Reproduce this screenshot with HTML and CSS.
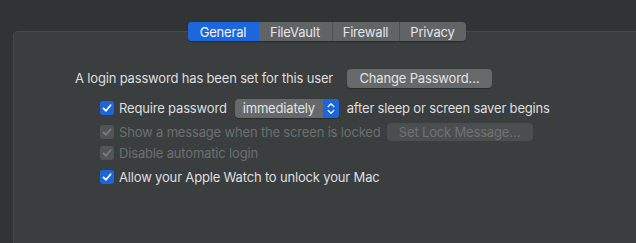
FILE: index.html
```html
<!DOCTYPE html>
<html>
<head>
<meta charset="utf-8">
<link rel="stylesheet" href="styles.css">
</head>
<body>
<div class="window">
  <div class="tabs-row">
    <div class="tabs">
      <div class="tab active">General</div>
      <div class="tab">FileVault</div>
      <div class="tab">Firewall</div>
      <div class="tab">Privacy</div>
    </div>
  </div>
  <div class="panel">
    <div class="row row-first">
      <span class="label">A login password has been set for this user</span>
      <span class="btn btn-change">Change Password…</span>
    </div>
    <div class="row row-check row-req">
      <span class="cb on"><svg viewBox="0 0 14 14"><path d="M3.5 7.3 L6 9.8 L10.6 4.2" /></svg></span>
      <span class="label">Require password</span>
      <span class="popup"><span class="popup-text">immediately</span><span class="popup-arrows"><svg viewBox="0 0 16 20"><path d="M5 8 L8 5 L11 8 M5 12 L8 15 L11 12"/></svg></span></span>
      <span class="label">after sleep or screen saver begins</span>
    </div>
    <div class="row row-check row-msg disabled">
      <span class="cb dis"><svg viewBox="0 0 14 14"><path d="M3.5 7.3 L6 9.8 L10.6 4.2" /></svg></span>
      <span class="label">Show a message when the screen is locked</span>
      <span class="btn btn-dis">Set Lock Message…</span>
    </div>
    <div class="row row-check row-auto disabled">
      <span class="cb dis"><svg viewBox="0 0 14 14"><path d="M3.5 7.3 L6 9.8 L10.6 4.2" /></svg></span>
      <span class="label">Disable automatic login</span>
    </div>
    <div class="row row-check row-watch">
      <span class="cb on"><svg viewBox="0 0 14 14"><path d="M3.5 7.3 L6 9.8 L10.6 4.2" /></svg></span>
      <span class="label">Allow your Apple Watch to unlock your Mac</span>
    </div>
  </div>
</div>
</body>
</html>
```

FILE: styles.css
```css
html, body {
  margin: 0;
  padding: 0;
  background: #303435;
  overflow: hidden;
}
body {
  width: 636px;
  height: 243px;
  font-family: Inter, "Noto Sans", "DejaVu Sans", sans-serif;
  font-size: 13px;
  letter-spacing: -0.17px;
  color: #dedfdf;
}
.window {
  padding-top: 22px;
  width: 636px;
  height: 221px;
  overflow: hidden;
}
.tabs-row {
  display: flex;
  justify-content: center;
  width: 627px;
  margin-left: 13px;
  position: relative;
  z-index: 2;
}
.tabs {
  display: flex;
  height: 19px;
  border-radius: 4px;
  overflow: hidden;
  background: #606465;
  box-shadow: 0 0.5px 1px rgba(0,0,0,0.35);
}
.tab {
  display: flex;
  align-items: center;
  justify-content: center;
  color: #e4e5e5;
  border-left: 1px solid #4d5152;
}
.tab:nth-child(1) { width: 71px; border-left: none; }
.tab:nth-child(2) { width: 73px; border-left: none; }
.tab:nth-child(3) { width: 66px; }
.tab:nth-child(4) { width: 66px; }
.tab.active {
  background: #1c67dc;
  color: #f4f6fa;
}
.panel {
  margin-top: -10px;
  margin-left: 13px;
  width: 640px;
  height: 215px;
  box-sizing: border-box;
  border: 1px solid #454a4b;
  border-radius: 5px;
  background: #3a3e3f;
  padding-top: 36px;
  padding-left: 61px;
  display: flex;
  flex-direction: column;
}
.row {
  display: flex;
  align-items: center;
  height: 20px;
  white-space: nowrap;
}
.row-check { padding-left: 25px; }
.row-req { margin-top: 10px; }
.row-msg { margin-top: 4px; }
.row-auto { margin-top: 1px; }
.row-watch { margin-top: 4px; }
.label { color: #dedfdf; }
.disabled .label { color: #6b6f70; }
.btn {
  display: inline-flex;
  align-items: center;
  justify-content: center;
  height: 19px;
  border-radius: 4px;
  background: #65696a;
  color: #e2e3e3;
  box-shadow: 0 0.5px 1px rgba(0,0,0,0.3);
}
.btn-change {
  margin-left: 14px;
  width: 145px;
}
.btn-dis {
  margin-left: 6px;
  width: 146px;
  height: 18px;
  background: #4a4e4f;
  color: #6f7374;
  box-shadow: none;
}
.cb {
  width: 14px;
  height: 14px;
  border-radius: 3px;
  margin-right: 5px;
  flex: none;
  display: inline-flex;
}
.cb svg { width: 14px; height: 14px; }
.cb path {
  fill: none;
  stroke-width: 1.7;
  stroke-linecap: round;
  stroke-linejoin: round;
}
.cb.on { background: #1b66dc; }
.cb.on path { stroke: #ffffff; }
.cb.dis { background: #515556; }
.cb.dis path { stroke: #797d7e; }
.popup {
  display: inline-flex;
  height: 19px;
  margin-left: 8px;
  margin-right: 8px;
  border-radius: 4px;
  overflow: hidden;
  background: #65696a;
  box-shadow: 0 0.5px 1px rgba(0,0,0,0.3);
}
.popup-text {
  width: 88px;
  display: flex;
  align-items: center;
  padding-left: 8px;
  box-sizing: border-box;
  color: #e2e3e3;
}
.popup-arrows {
  width: 16px;
  background: #1b66dc;
  display: flex;
  align-items: center;
  justify-content: center;
}
.popup-arrows svg { width: 16px; height: 19px; }
.popup-arrows path {
  fill: none;
  stroke: #ffffff;
  stroke-width: 1.4;
  stroke-linecap: round;
  stroke-linejoin: round;
}
```
